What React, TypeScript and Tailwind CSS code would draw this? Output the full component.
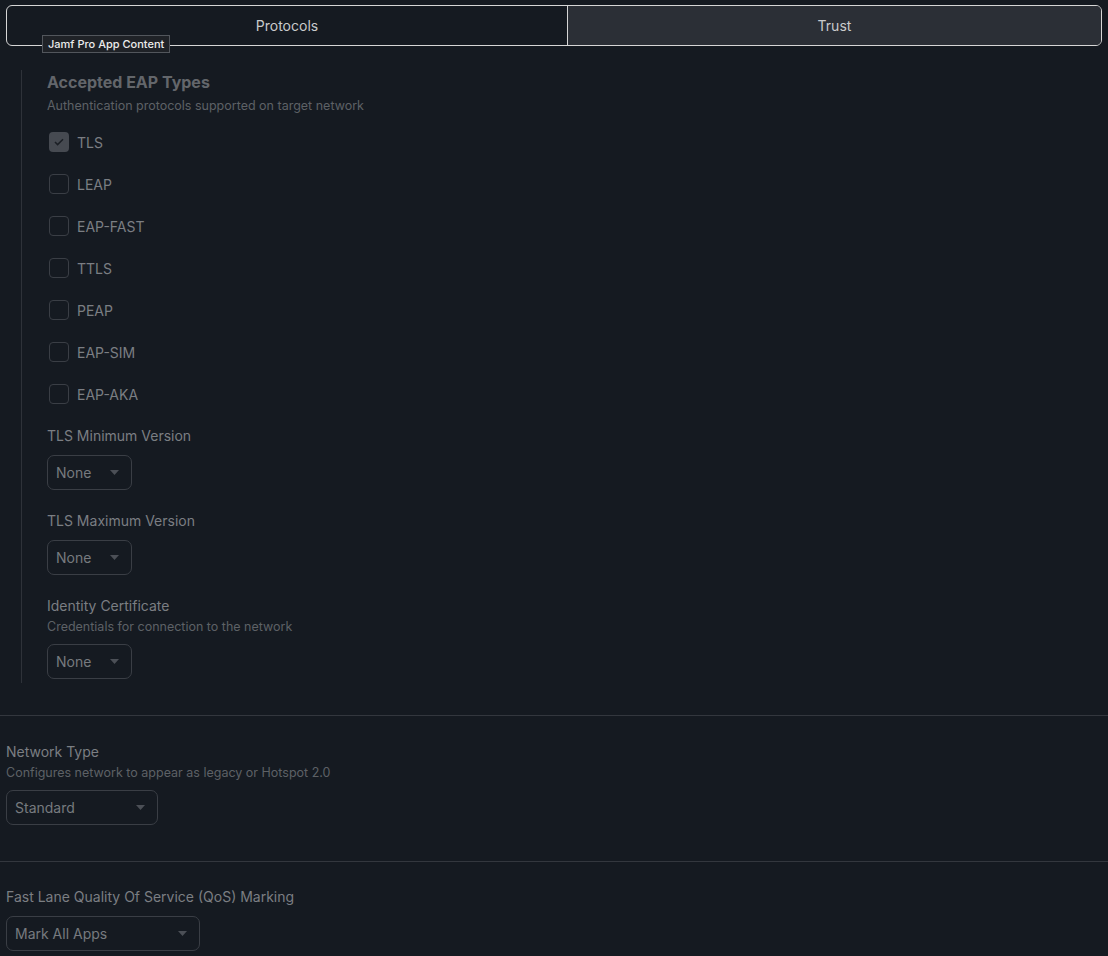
import { useState } from "react";

const eapTypes = ["TLS", "LEAP", "EAP-FAST", "TTLS", "PEAP", "EAP-SIM", "EAP-AKA"];

function Caret() {
  return (
    <svg width="9" height="5" viewBox="0 0 9 5" className="shrink-0">
      <path d="M0 0h9L4.5 5z" fill="#4b4f56" />
    </svg>
  );
}

function Select({ value, width }: { value: string; width: string }) {
  return (
    <div
      className={`flex items-center justify-between h-[35px] ${width} pl-[8px] pr-[12px] rounded-[7px] border border-[#3a3e45] bg-[#151a21] text-[14px] text-[#777a7f]`}
    >
      <span>{value}</span>
      <Caret />
    </div>
  );
}

function clsx_(...c: (string | false | undefined)[]) {
  return c.filter(Boolean).join(" ");
}

function Checkbox({ label, checked }: { label: string; checked?: boolean }) {
  return (
    <div className="flex items-center h-[42px] gap-[8px]">
      <div
        className={clsx_(
          "ml-[2px] w-[20px] h-[20px] rounded-[4px] flex items-center justify-center",
          checked ? "bg-[#464a51]" : "border border-[#3a3e45]"
        )}
      >
        {checked && (
          <svg width="10" height="8" viewBox="0 0 10 8">
            <path d="M1 4l2.6 2.6L9 1.2" fill="none" stroke="#1b1f25" strokeWidth="1.5" />
          </svg>
        )}
      </div>
      <span className="text-[14px] text-[#7b7e83]">{label}</span>
    </div>
  );
}

export default function App() {
  const [tab, setTab] = useState("Trust");

  return (
    <div className="min-h-[956px] bg-[#151a21] font-['Inter','Liberation_Sans',sans-serif] pt-[5px] px-[6px]">
      {/* Tabs */}
      <div className="relative flex h-[41px] rounded-[6px] border border-[#d6d6d6]">
        {["Protocols", "Trust"].map((t, i) => (
          <button
            key={t}
            onClick={() => setTab(t)}
            className={clsx_(
              "flex items-center justify-center text-[14px] text-[#c9cacc]",
              i === 0 ? "w-[561px] shrink-0 border-r border-[#d6d6d6] rounded-l-[5px]" : "flex-1 rounded-r-[5px]",
              tab === t && "bg-[#2b2f36]"
            )}
          >
            {t}
          </button>
        ))}
        <div className="absolute left-[35px] top-[29px] h-[18px] px-[5px] flex items-center bg-[#1f2227] border border-[#52565c] text-[11px] font-medium text-[#ececec] whitespace-nowrap">
          Jamf Pro App Content
        </div>
      </div>

      {/* EAP section */}
      <div className="mt-[24px] ml-[15px] border-l border-[#2e3239] pl-[25px] pb-[4px]">
        <div className="pt-[1px] text-[16px] font-bold text-[#63666b] leading-[22px]">Accepted EAP Types</div>
        <div className="mt-[4px] text-[12.5px] text-[#5d6166] leading-[18px]">
          Authentication protocols supported on target network
        </div>
        <div className="mt-[6px]">
          {eapTypes.map((t, i) => (
            <Checkbox key={t} label={t} checked={i === 0} />
          ))}
        </div>

        <div className="mt-[11px] text-[14px] text-[#7b7e83] leading-[20px]">TLS Minimum Version</div>
        <div className="mt-[9px]">
          <Select value="None" width="w-[85px]" />
        </div>

        <div className="mt-[21px] text-[14px] text-[#7b7e83] leading-[20px]">TLS Maximum Version</div>
        <div className="mt-[9px]">
          <Select value="None" width="w-[85px]" />
        </div>

        <div className="mt-[21px] text-[14px] text-[#7b7e83] leading-[20px]">Identity Certificate</div>
        <div className="mt-[2px] text-[12.5px] text-[#5d6166] leading-[18px]">
          Credentials for connection to the network
        </div>
        <div className="mt-[8px]">
          <Select value="None" width="w-[85px]" />
        </div>
      </div>

      <div className="mt-[32px] -mx-[6px] border-t border-[#33373e]" />

      <div className="pt-[26px]">
        <div className="text-[14px] text-[#7b7e83] leading-[20px]">Network Type</div>
        <div className="mt-[2px] text-[12.5px] text-[#5d6166] leading-[18px]">
          Configures network to appear as legacy or Hotspot 2.0
        </div>
        <div className="mt-[8px]">
          <Select value="Standard" width="w-[152px]" />
        </div>
      </div>

      <div className="mt-[36px] -mx-[6px] border-t border-[#33373e]" />

      <div className="pt-[25px]">
        <div className="text-[14px] text-[#7b7e83] leading-[20px]">Fast Lane Quality Of Service (QoS) Marking</div>
        <div className="mt-[9px]">
          <Select value="Mark All Apps" width="w-[194px]" />
        </div>
      </div>
    </div>
  );
}
